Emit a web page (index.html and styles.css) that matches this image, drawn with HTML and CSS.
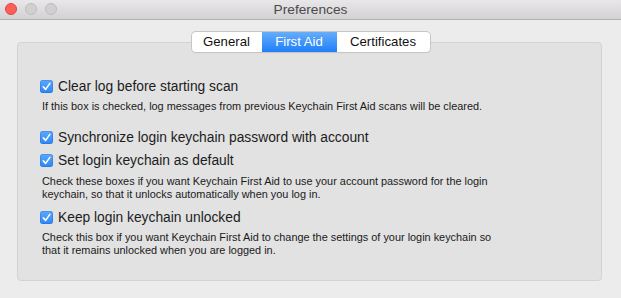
FILE: index.html
```html
<!DOCTYPE html>
<html>
<head>
<meta charset="utf-8">
<link rel="stylesheet" href="styles.css">
</head>
<body>
<div class="window">
  <div class="titlebar">
    <div class="lights">
      <span class="light close"></span>
      <span class="light off"></span>
      <span class="light off"></span>
    </div>
    <div class="title">Preferences</div>
  </div>
  <div class="content">
    <div class="tabs">
      <div class="tab tab-general">General</div>
      <div class="tab tab-aid selected">First Aid</div>
      <div class="tab tab-cert">Certificates</div>
    </div>
    <div class="panel">
      <div class="row r1"><span class="cb"><svg viewBox="0 0 13 13" width="13" height="13"><path d="M3.3 6.8 L5.6 9.4 L9.9 3.4" fill="none" stroke="#fff" stroke-width="1.6" stroke-linecap="round" stroke-linejoin="round"/></svg></span><span class="label">Clear log before starting scan</span></div>
      <p class="desc d1">If this box is checked, log messages from previous Keychain First Aid scans will be cleared.</p>
      <div class="row r2"><span class="cb"><svg viewBox="0 0 13 13" width="13" height="13"><path d="M3.3 6.8 L5.6 9.4 L9.9 3.4" fill="none" stroke="#fff" stroke-width="1.6" stroke-linecap="round" stroke-linejoin="round"/></svg></span><span class="label">Synchronize login keychain password with account</span></div>
      <div class="row r3"><span class="cb"><svg viewBox="0 0 13 13" width="13" height="13"><path d="M3.3 6.8 L5.6 9.4 L9.9 3.4" fill="none" stroke="#fff" stroke-width="1.6" stroke-linecap="round" stroke-linejoin="round"/></svg></span><span class="label">Set login keychain as default</span></div>
      <p class="desc d3">Check these boxes if you want Keychain First Aid to use your account password for the login<br>keychain, so that it unlocks automatically when you log in.</p>
      <div class="row r4"><span class="cb"><svg viewBox="0 0 13 13" width="13" height="13"><path d="M3.3 6.8 L5.6 9.4 L9.9 3.4" fill="none" stroke="#fff" stroke-width="1.6" stroke-linecap="round" stroke-linejoin="round"/></svg></span><span class="label">Keep login keychain unlocked</span></div>
      <p class="desc d4">Check this box if you want Keychain First Aid to change the settings of your login keychain so<br>that it remains unlocked when you are logged in.</p>
    </div>
  </div>
</div>
</body>
</html>
```

FILE: styles.css
```css
* { box-sizing: border-box; }
html, body {
  margin: 0;
  padding: 0;
  width: 621px;
  height: 298px;
  overflow: hidden;
  background: #ececec;
  font-family: "Liberation Sans", Arial, sans-serif;
  color: #1e1e1e;
}
.window {
  width: 621px;
  height: 298px;
  background: #ececec;
}
.titlebar {
  height: 20px;
  background: linear-gradient(#e9e7e9, #d3d1d3);
  border-bottom: 1px solid #b3b1b3;
  display: flex;
  align-items: center;
  position: relative;
}
.lights {
  display: flex;
  gap: 8px;
  padding-left: 5px;
  margin-top: -1px;
}
.light {
  width: 12px;
  height: 12px;
  border-radius: 50%;
  display: block;
}
.light.close {
  background: #fc5f57;
  border: 1px solid #e1463f;
}
.light.off {
  background: #d1d0d1;
  border: 1px solid #bebcbe;
}
.title {
  position: absolute;
  left: 0;
  right: 0;
  top: 0;
  line-height: 19px;
  text-align: center;
  font-size: 13.7px;
  color: #4b4b4b;
}
.content {
  padding: 12px 19px 0 17px;
  display: flex;
  flex-direction: column;
}
.tabs {
  align-self: center;
  margin-left: 2px;
  display: flex;
  height: 20px;
  border-radius: 4px;
  background: #fff;
  box-shadow: 0 0 0 1px #c6c6c6, 0 1px 1px rgba(0,0,0,0.12);
  position: relative;
  z-index: 2;
  overflow: hidden;
}
.tab {
  height: 20px;
  line-height: 20px;
  font-size: 13.2px;
  text-align: center;
  color: #111;
}
.tab-general { width: 70px; }
.tab-aid { width: 75px; }
.tab-cert { width: 93px; }
.tab.selected {
  background: linear-gradient(#66adfa, #1e7ff8);
  color: #fff;
}
.panel {
  margin-top: -10px;
  height: 239px;
  background: #e2e2e2;
  border: 1px solid #d3d3d3;
  border-radius: 4px;
  padding: 32px 10px 0 22px;
}
.row {
  display: flex;
  align-items: center;
  height: 23px;
}
.cb {
  width: 13px;
  height: 13px;
  border-radius: 3px;
  background: linear-gradient(#5aa9fb, #2d86f5);
  box-shadow: inset 0 0 0 0.5px rgba(0,60,160,0.35);
  display: block;
  flex: none;
}
.cb svg { display: block; }
.label {
  margin-left: 5px;
  font-size: 13.8px;
  color: #1c1c1c;
  white-space: nowrap;
}
.desc {
  margin: 0;
  padding-left: 2px;
  font-size: 10.9px;
  line-height: 13px;
  color: #1a1a1a;
  white-space: nowrap;
}
.d1 { margin-top: 2px; }
.r2 { margin-top: 13px; }
.d3 { margin-top: 3px; }
.r4 { margin-top: 5px; }
.d4 { margin-top: 2px; }
```
